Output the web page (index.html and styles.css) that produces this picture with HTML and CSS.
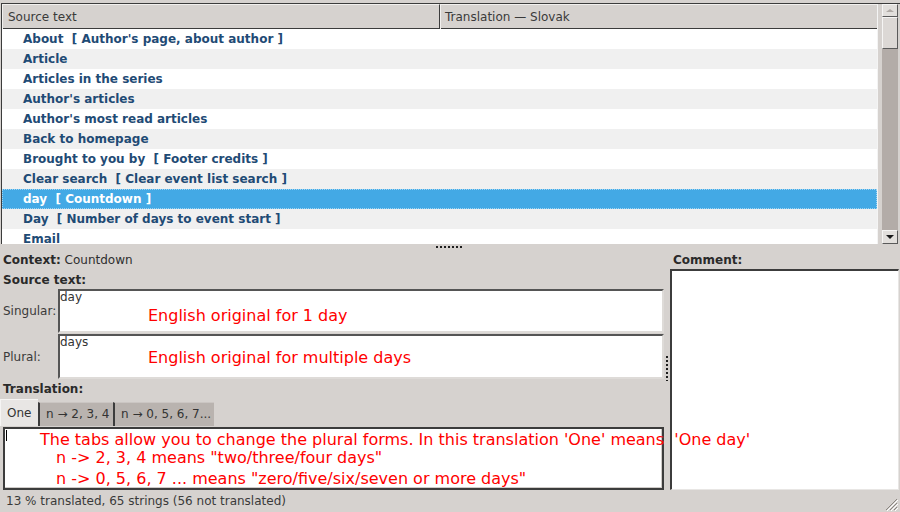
FILE: index.html
```html
<!DOCTYPE html>
<html>
<head>
<meta charset="utf-8">
<link rel="stylesheet" href="styles.css">
</head>
<body>
<div class="window">
  <div class="top">
    <div class="listframe">
      <div class="table">
        <div class="thead">
          <div class="th">Source text</div>
          <div class="th th2">Translation — Slovak</div>
        </div>
        <div class="rows">
          <div class="row">About  [ Author's page, about author ]</div>
          <div class="row alt">Article</div>
          <div class="row">Articles in the series</div>
          <div class="row alt">Author's articles</div>
          <div class="row">Author's most read articles</div>
          <div class="row alt">Back to homepage</div>
          <div class="row">Brought to you by  [ Footer credits ]</div>
          <div class="row alt">Clear search  [ Clear event list search ]</div>
          <div class="row sel">day  [ Countdown ]</div>
          <div class="row alt">Day  [ Number of days to event start ]</div>
          <div class="row">Email</div>
        </div>
      </div>
      <div class="vscroll">
        <div class="sbtn up"><span class="tri-up"></span></div>
        <div class="thumb"></div>
        <div class="track"></div>
        <div class="sbtn down"><span class="tri-down"></span></div>
      </div>
    </div>
  </div>
  <div class="hsplit"><span class="dots-h"></span></div>
  <div class="bottom">
    <div class="leftcol">
      <div class="line ctx"><b>Context:</b> Countdown</div>
      <div class="line src"><b>Source text:</b></div>
      <div class="field sing">
        <div class="flabel">Singular:</div>
        <div class="box">
          <div class="plain">day</div>
          <div class="note n1">English original for 1 day</div>
        </div>
      </div>
      <div class="field plur">
        <div class="flabel">Plural:</div>
        <div class="box">
          <div class="plain">days</div>
          <div class="note n2">English original for multiple days</div>
        </div>
      </div>
      <div class="line trl"><b>Translation:</b></div>
      <div class="tabs">
        <div class="tab active">One</div>
        <div class="tab">n → 2, 3, 4</div>
        <div class="tab">n → 0, 5, 6, 7...</div>
      </div>
      <div class="tbox">
        <span class="cursor"></span>
        <div class="note t1">The tabs allow you to change the plural forms. In this translation 'One' means&nbsp; 'One day'</div>
        <div class="note t2">n -&gt; 2, 3, 4 means "two/three/four days"</div>
        <div class="note t3">n -&gt; 0, 5, 6, 7 ... means "zero/five/six/seven or more days"</div>
      </div>
    </div>
    <div class="vsplit"><span class="dots-v"></span></div>
    <div class="rightcol">
      <div class="line ctx"><b>Comment:</b></div>
      <div class="cbox"></div>
    </div>
  </div>
  <div class="status">
    <span>13 % translated, 65 strings (56 not translated)</span>
    <svg class="grip" width="14" height="14" viewBox="0 0 14 14">
      <path d="M13 2 L2 13 M13 6 L6 13 M13 10 L10 13" stroke="#8a8580" stroke-width="1"/>
      <path d="M14 3 L3 14 M14 7 L7 14 M14 11 L11 14" stroke="#ffffff" stroke-width="1"/>
    </svg>
  </div>
</div>
</body>
</html>
```
FILE: styles.css
```css
* { box-sizing: border-box; }
html, body { margin: 0; padding: 0; }
body {
  background: #d6d2cf;
  font-family: "DejaVu Sans", sans-serif;
  font-size: 12px;
  color: #2e2e2e;
}
.window {
  width: 900px;
  height: 512px;
  display: flex;
  flex-direction: column;
  overflow: hidden;
}
.top {
  height: 244px;
  padding-top: 3px;
}
.listframe {
  display: flex;
  height: 241px;
  margin-left: 1px;
  border-top: 1px solid #3c3c3c;
  border-left: 1px solid #3c3c3c;
}
.table {
  width: 876px;
  background: #fff;
  overflow: hidden;
  border-right: 1px solid #f4f4f4;
}
.thead {
  display: grid;
  grid-template-columns: 438px 438px;
  height: 25px;
  background: #d6d2cf;
  border-bottom: 1px solid #3c3c3c;
}
.th {
  padding-left: 5px;
  line-height: 24px;
  color: #3a3a3a;
  border-right: 1px solid #3c3c3c;
  border-left: 1px solid #f2f0ee;
  border-top: 1px solid #f2f0ee;
}
.th2 { padding-left: 4px; }
.row {
  height: 20px;
  line-height: 20px;
  padding-left: 21px;
  font-weight: bold;
  font-size: 12px;
  color: #1f4b75;
  white-space: pre;
  background: #fff;
}
.row.alt { background: #f0f0f0; }
.row.sel {
  background: #43a9e5;
  color: #fff;
  outline: 1px dotted #9ed4f3;
  outline-offset: -1px;
}
.vscroll {
  width: 16px;
  margin-left: 4px;
  display: flex;
  flex-direction: column;
}
.sbtn {
  height: 13px;
  background: #e2dfdc;
  border: 1px solid;
  border-color: #f6f5f4 #5a5a5a #5a5a5a #f6f5f4;
  display: flex;
  align-items: center;
  justify-content: center;
}
.sbtn.down { height: 14px; }
.tri-up {
  width: 0; height: 0;
  border-left: 4px solid transparent;
  border-right: 4px solid transparent;
  border-bottom: 3px solid #b0aaa6;
}
.tri-down {
  width: 0; height: 0;
  border-left: 4px solid transparent;
  border-right: 4px solid transparent;
  border-top: 4px solid #1a1a1a;
}
.thumb {
  height: 32px;
  background: #dcd8d5;
  border: 1px solid;
  border-color: #f6f5f4 #5a5a5a #5a5a5a #f6f5f4;
}
.track {
  flex: 1;
  background: #b3aca8;
}
.hsplit {
  height: 6px;
  display: flex;
  justify-content: center;
}
.dots-h {
  display: block;
  width: 28px;
  height: 2px;
  margin-top: 2px;
  background: repeating-linear-gradient(90deg, #1e1e1e 0 2px, transparent 2px 4px);
}
.bottom {
  height: 240px;
  display: flex;
}
.leftcol {
  width: 665px;
  display: flex;
  flex-direction: column;
  position: relative;
  z-index: 2;
}
.line {
  height: 15px;
  line-height: 15px;
  padding-left: 3px;
  white-space: nowrap;
}
.line b { color: #2a2a2a; }
.ctx { margin-top: 3px; }
.src { margin-top: 5px; }
.trl { margin-top: 3px; }
.field {
  display: flex;
  align-items: center;
}
.sing { margin-top: 1px; height: 44px; }
.plur { margin-top: 1px; height: 45px; }
.flabel {
  width: 58px;
  padding-left: 3px;
  color: #3a3a3a;
}
.box {
  width: 606px;
  height: 100%;
  background: #fff;
  border-top: 2px solid #555;
  border-left: 2px solid #555;
  border-right: 2px solid #dedbd8;
  border-bottom: 2px solid #dedbd8;
}
.plain {
  line-height: 13px;
  color: #333;
}
.note {
  color: #ff0000;
  font-size: 16px;
  white-space: nowrap;
}
.n1 { padding-left: 88px; margin-top: 2px; line-height: 20px; }
.n2 { padding-left: 88px; margin-top: 0; line-height: 18px; }
.tabs {
  display: flex;
  align-items: flex-end;
  margin-top: 2px;
  height: 27px;
}
.tab {
  height: 24px;
  line-height: 22px;
  padding: 0 6px;
  background: #b9b3af;
  color: #333;
  border-left: 2px solid #3c3c3c;
  border-top: 1px solid #cbc6c3;
  white-space: nowrap;
}
.tab.active {
  width: 38px;
  height: 27px;
  line-height: 26px;
  background: #e8e6e4;
  border-left: 1px solid #f6f5f4;
  border-top: 1px solid #f6f5f4;
  padding: 0 0 0 6px;
}
.tab:nth-child(2) { width: 75px; }
.tab:nth-child(3) { width: 101px; }
.tbox {
  margin-top: 1px;
  margin-left: 3px;
  width: 661px;
  height: 63px;
  padding-top: 2px;
  background: #fff;
  border: 2px solid #3c3c3c;
  box-shadow: inset -1px -1px 0 #cfcbc8;
  position: relative;
}
.cursor {
  position: absolute;
  left: 1px;
  top: 1px;
  width: 1px;
  height: 11px;
  background: #000;
}
.t1, .t2, .t3 { font-size: 16px; line-height: 18px; }
.t1 { padding-left: 35px; }
.t2 { padding-left: 51px; }
.t3 { padding-left: 51px; margin-top: 3px; }
.vsplit {
  width: 5px;
  position: relative;
}
.dots-v {
  position: absolute;
  left: 1px;
  top: 106px;
  width: 2px;
  height: 25px;
  background: repeating-linear-gradient(180deg, #1e1e1e 0 2px, transparent 2px 4px);
}
.rightcol {
  width: 230px;
  display: flex;
  flex-direction: column;
  position: relative;
  z-index: 1;
}
.cbox {
  margin-top: 1px;
  width: 229px;
  flex: 1;
  background: #fff;
  border-top: 2px solid #3c3c3c;
  border-left: 2px solid #3c3c3c;
  border-right: 1px solid #e8e6e4;
  border-bottom: 1px solid #e8e6e4;
}
.status {
  height: 22px;
  display: flex;
  align-items: center;
  justify-content: space-between;
  padding-left: 6px;
  padding-right: 2px;
  color: #3a3a3a;
}
.grip { margin-top: 6px; }
```
